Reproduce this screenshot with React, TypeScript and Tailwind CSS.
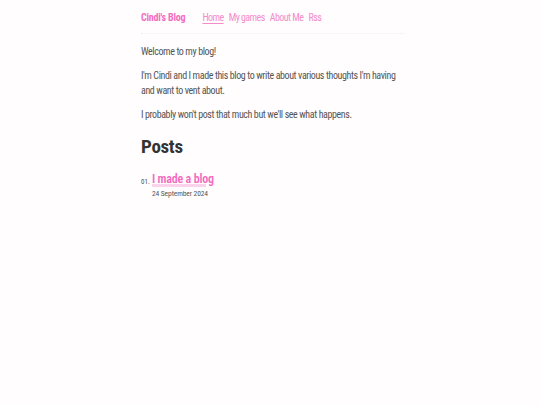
const posts = [{ title: "I made a blog", date: "24 September 2024" }];

const navLinks = ["Home", "My games", "About Me", "Rss"];

export default function App() {
	return (
		<div className="min-h-screen bg-[#fffdfe] font-['Roboto_Condensed','DejaVu_Sans_Condensed',sans-serif] text-[#555]">
			<div className="mx-auto w-[270px] pl-[6px]">
				<header className="flex h-[34px] items-center border-b border-dotted border-[#eeeeee] pt-[2px]">
					<a href="#" className="text-[10px] font-bold tracking-[-0.2px] text-[#f36bbf]">
						Cindi&apos;s Blog
					</a>
					<nav className="ml-[17px] flex gap-[5px] text-[10px] tracking-[-0.55px] text-[#f48ccc]">
						{navLinks.map((link, i) => (
							<a key={link} href="#" className={i === 0 ? "underline underline-offset-[2px]" : ""}>
								{link}
							</a>
						))}
					</nav>
				</header>

				<main className="pt-[10px] text-[10px] leading-[15px] tracking-[-0.4px]">
					<p>Welcome to my blog!</p>
					<p className="mt-[9px]">
						I&apos;m Cindi and I made this blog to write about various thoughts I&apos;m having and want to vent about.
					</p>
					<p className="mt-[9px]">I probably won&apos;t post that much but we&apos;ll see what happens.</p>

					<h1 className="mt-[12px] text-[19px] font-bold leading-[26px] tracking-[-0.3px] text-[#333]">Posts</h1>

					<ol className="mt-[10px]">
						{posts.map((post, i) => (
							<li key={post.title} className="flex items-start">
								<span className="mt-[5px] w-[11px] text-[7px] tracking-normal">{String(i + 1).padStart(2, "0")}.</span>
								<div>
									<a
										href="#"
										className="text-[12px] font-semibold leading-[18px] tracking-[-0.2px] text-[#f36bbf] underline decoration-[#fbd3ec] decoration-[3px] underline-offset-[1px]"
									>
										{post.title}
									</a>
									<p className="text-[7.5px] leading-[12px] tracking-[-0.1px]">{post.date}</p>
								</div>
							</li>
						))}
					</ol>
				</main>
			</div>
		</div>
	);
}
